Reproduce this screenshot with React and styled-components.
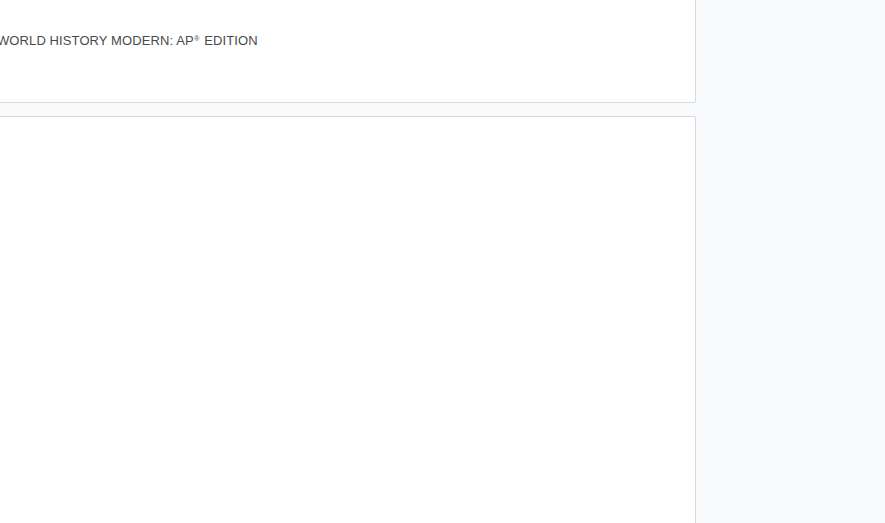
import React from "react";
import styled, { createGlobalStyle } from "styled-components";

const GlobalStyle = createGlobalStyle`
  html, body {
    margin: 0;
    padding: 0;
    background-color: #f9fafc;
    overflow: hidden;
  }
`;

const Page = styled.div`
  display: flex;
  height: 523px;
  overflow: hidden;
  font-family: "Liberation Sans", Arial, sans-serif;
`;

const Main = styled.div`
  display: flex;
  flex-direction: column;
  gap: 13px;
  width: 721px;
  margin-left: -25px;
  margin-top: -20px;
  flex-shrink: 0;
`;

const Panel = styled.section`
  flex-shrink: 0;
  background-color: #ffffff;
  border: 1px solid #d6d9de;
  border-radius: 2px;
  height: ${(p) => p.height}px;
  box-sizing: border-box;
`;

const TitleBar = styled.div`
  display: flex;
  align-items: center;
  height: 100%;
  padding: 0 0 3px 21px;
  box-sizing: border-box;
`;

const Title = styled.h1`
  margin: 0;
  font-size: 13px;
  font-weight: 400;
  color: #4a4a4a;
  letter-spacing: 0.1px;
  white-space: nowrap;
`;

const Mark = styled.sup`
  font-size: 7px;
  vertical-align: 4px;
  margin: 0 1px 0 0.5px;
  line-height: 0;
`;

const Sidebar = styled.aside`
  flex: 1;
  background-color: #f9fafc;
`;

export default function App() {
  return (
    <>
      <GlobalStyle />
      <Page>
        <Main>
          <Panel height={123}>
            <TitleBar>
              <Title>
                WORLD HISTORY MODERN: AP<Mark>®</Mark> EDITION
              </Title>
            </TitleBar>
          </Panel>
          <Panel height={460} />
        </Main>
        <Sidebar />
      </Page>
    </>
  );
}
